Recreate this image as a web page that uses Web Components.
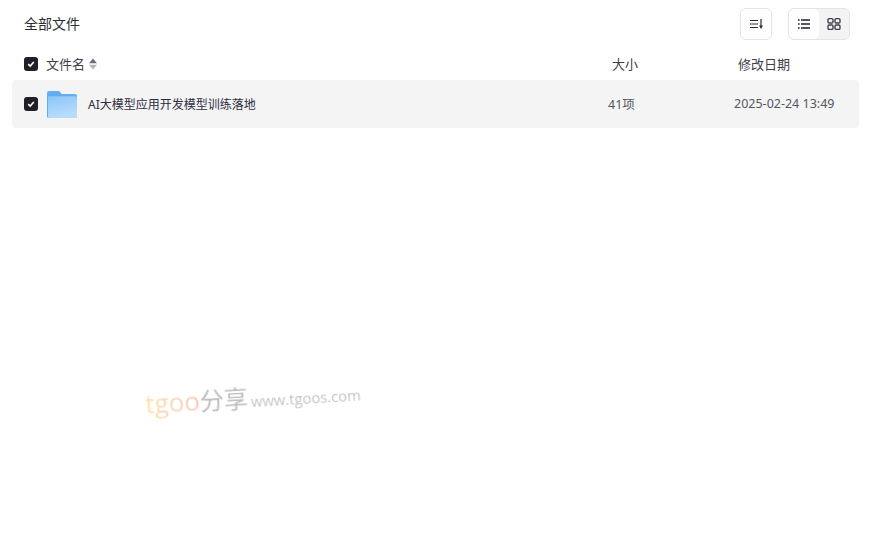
<!DOCTYPE html>
<html lang="zh">
<head>
<meta charset="utf-8">
<title>全部文件</title>
<style>
  html, body { margin: 0; padding: 0; background: #fff; }
  body { font-family: "Noto Sans", "Noto Sans CJK SC", sans-serif; height: 538px; overflow: hidden; }
</style>
</head>
<body>
<file-page>
  <file-toolbar title-text="全部文件"></file-toolbar>
  <file-header></file-header>
  <file-row name="AI大模型应用开发模型训练落地" size="41项" date="2025-02-24 13:49"></file-row>
</file-page>
<water-mark></water-mark>

<script>
// Small checked box, used by header and rows
class FileCheck extends HTMLElement {
  constructor() {
    super();
    this.attachShadow({ mode: 'open' }).innerHTML = `
    <style>
      :host { display: block; width: 14px; height: 14px; flex: none; }
      .box { width: 14px; height: 14px; border-radius: 3px; background: #1f2027; display: flex; align-items: center; justify-content: center; }
      svg { display: block; }
    </style>
    <div class="box">
      <svg width="8" height="8" viewBox="0 0 8 8" fill="none"><path d="M1.2 4.2 3.2 6.1 6.8 1.9" stroke="#fff" stroke-width="1.6"/></svg>
    </div>`;
  }
}

class FilePage extends HTMLElement {
  constructor() {
    super();
    this.attachShadow({ mode: 'open' }).innerHTML = `
    <style>
      :host { display: flex; flex-direction: column; width: 847px; margin-left: 12px; }
    </style>
    <slot></slot>`;
  }
}

class FileToolbar extends HTMLElement {
  constructor() {
    super();
    const title = this.getAttribute('title-text');
    this.attachShadow({ mode: 'open' }).innerHTML = `
    <style>
      :host { display: flex; align-items: center; justify-content: space-between; height: 48px; padding: 0 9px 0 12px; }
      .title { font-size: 14px; color: #2c2d33; padding-bottom: 2px; }
      .tools { display: flex; gap: 16px; }
      .btn { box-sizing: border-box; width: 32px; height: 32px; border: 1px solid #e5e5e7; border-radius: 6px; display: flex; align-items: center; justify-content: center; background: #fff; }
      .switch { box-sizing: border-box; width: 62px; height: 32px; border: 1px solid #e5e5e7; border-radius: 6px; display: flex; background: #f3f3f4; overflow: hidden; }
      .switch div { width: 30px; display: flex; align-items: center; justify-content: center; }
      .switch .on { background: #fff; border-radius: 6px; }
      svg { display: block; }
    </style>
    <div class="title">${title}</div>
    <div class="tools">
      <div class="btn">
        <svg width="14" height="14" viewBox="0 0 14 14" fill="none" stroke="#2b2c33" stroke-width="1.2">
          <path d="M1 3.5H9M1 7H9M1 10.5H9M12 2V9"/>
          <path d="M10 8.5H14L12 12Z" fill="#2b2c33" stroke="none"/>
        </svg>
      </div>
      <div class="switch">
        <div class="on">
          <svg width="14" height="14" viewBox="0 0 14 14" fill="none" stroke="#1f2027" stroke-width="1.3">
            <path d="M4 3H13M4 7H13M4 11H13M1 3H2.6M1 7H2.6M1 11H2.6"/>
          </svg>
        </div>
        <div>
          <svg width="14" height="14" viewBox="0 0 14 14" fill="none" stroke="#3f4047" stroke-width="1.4">
            <rect x="1" y="1.6" width="5" height="4.4" rx="1.2"/><rect x="8" y="1.6" width="5" height="4.4" rx="1.2"/>
            <rect x="1" y="8" width="5" height="4.4" rx="1.2"/><rect x="8" y="8" width="5" height="4.4" rx="1.2"/>
          </svg>
        </div>
      </div>
    </div>`;
  }
}

class FileHeader extends HTMLElement {
  constructor() {
    super();
    this.attachShadow({ mode: 'open' }).innerHTML = `
    <style>
      :host { display: flex; align-items: center; height: 32px; padding-left: 12px; font-size: 13px; color: #3d3e4a; }
      .name { display: flex; align-items: center; margin-left: 8px; width: 566px; padding-bottom: 2px; }
      .size { width: 126px; padding-bottom: 2px; }
      .date { padding-bottom: 2px; }
      svg { display: block; margin: 2px 0 0 4px; }
    </style>
    <file-check></file-check>
    <div class="name">文件名
      <svg width="8" height="12" viewBox="0 0 8 12"><path d="M4 .5 8 5.2H0Z" fill="#6d6e75"/><path d="M4 11.5 0 6.8H8Z" fill="#b5b5b9"/></svg>
    </div>
    <div class="size">大小</div>
    <div class="date">修改日期</div>`;
  }
}

class FileRow extends HTMLElement {
  constructor() {
    super();
    const name = this.getAttribute('name');
    const size = this.getAttribute('size');
    const date = this.getAttribute('date');
    this.attachShadow({ mode: 'open' }).innerHTML = `
    <style>
      :host { display: flex; align-items: center; height: 48px; padding-left: 12px; background: #f4f4f4; border-radius: 4px; font-size: 12.5px; color: #55565f; }
      svg { display: block; margin: 1px 0 0 9px; flex: none; }
      .name { margin-left: 11px; width: 520px; font-size: 12px; color: #2c2d40; white-space: nowrap; }
      .size { width: 126px; padding-bottom: 2px; }
      .date { white-space: nowrap; padding-bottom: 2px; }
    </style>
    <file-check></file-check>
    <svg width="30" height="27" viewBox="0 0 30 28" preserveAspectRatio="none">
      <defs>
        <linearGradient id="f" x1="0" y1="0" x2="0.3" y2="1">
          <stop offset="0" stop-color="#8cc5f8"/><stop offset="1" stop-color="#b8ddfb"/>
        </linearGradient>
      </defs>
      <path d="M0 2Q0 0 2 0H11Q12.5 0 13.5 1.5L14.5 3H28Q30 3 30 5V26.5Q30 28 28.5 28H1.5Q0 28 0 26.5Z" fill="#62aeee"/>
      <path d="M1 6.5Q1 5.5 2 5.5H28.5Q30 5.5 30 7V26.5Q30 28 28.5 28H2Q1 28 1 27Z" fill="url(#f)"/>
    </svg>
    <div class="name">${name}</div>
    <div class="size">${size}</div>
    <div class="date">${date}</div>`;
  }
}

// Faint site stamp lying over the empty page
class WaterMark extends HTMLElement {
  constructor() {
    super();
    this.attachShadow({ mode: 'open' }).innerHTML = `
    <style>
      :host { position: absolute; left: 145px; top: 379px; display: flex; align-items: baseline; transform: rotate(-3.5deg); white-space: nowrap; font-family: "Open Sans", "Noto Sans CJK SC", sans-serif; filter: blur(.3px); }
      .logo { font-size: 26px; background: linear-gradient(90deg, #fde3a8, #fbd6bd 50%, #f9c9b9); -webkit-background-clip: text; background-clip: text; color: transparent; }
      .cn { font-size: 24px; color: #bdbdbd; }
      .url { font-size: 14.8px; color: #c4c4c4; margin-left: 3px; }
    </style>
    <span class="logo">tgoo</span><span class="cn">分享</span><span class="url">www.tgoos.com</span>`;
  }
}

customElements.define('file-check', FileCheck);
customElements.define('file-page', FilePage);
customElements.define('file-toolbar', FileToolbar);
customElements.define('file-header', FileHeader);
customElements.define('file-row', FileRow);
customElements.define('water-mark', WaterMark);
</script>
</body>
</html>
